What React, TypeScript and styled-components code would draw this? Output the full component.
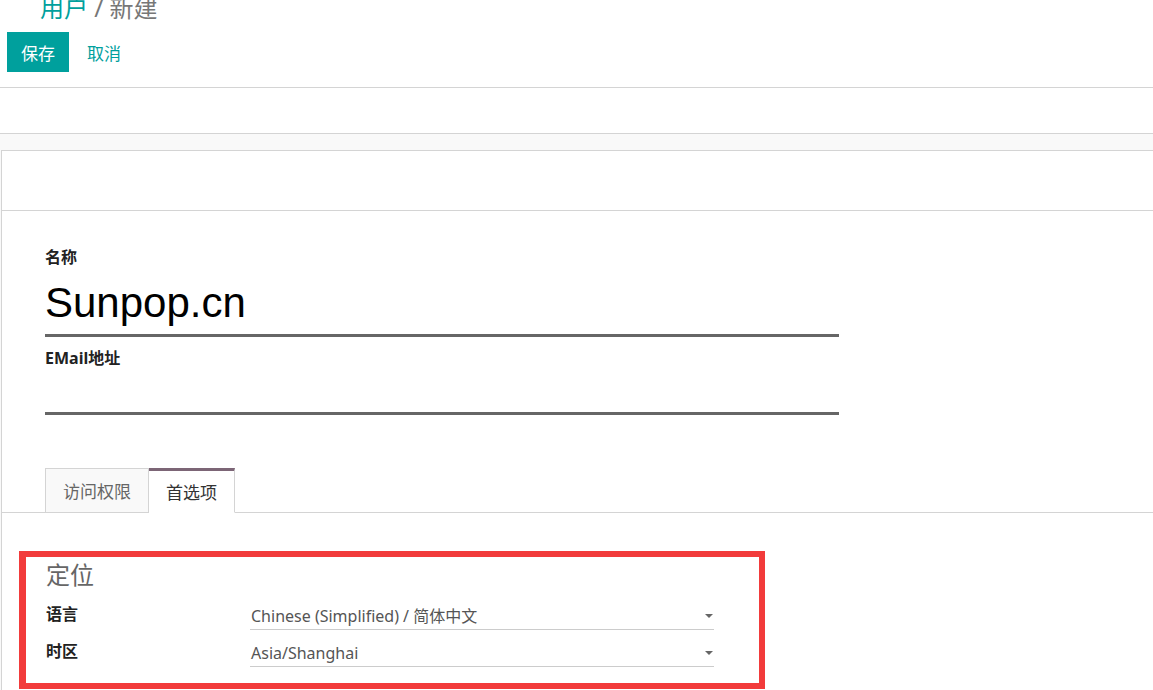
import React from "react";
import styled, { createGlobalStyle } from "styled-components";

const GlobalStyle = createGlobalStyle`
  html, body {
    margin: 0;
    padding: 0;
    background: #ffffff;
    overflow: hidden;
  }
  body {
    font-family: "Noto Sans", "Noto Sans CJK SC", sans-serif;
    color: #333333;
  }
  * {
    box-sizing: border-box;
  }
`;

const teal = "#00a09d";
const line = "#d4d4d4";

type TField = {
  readonly label: string;
  readonly value: string;
};

const locale: TField[] = [
  { label: "语言", value: "Chinese (Simplified) / 简体中文" },
  { label: "时区", value: "Asia/Shanghai" },
];

export default function App() {
  return (
    <Page>
      <GlobalStyle />
      <ControlPanel>
        <Breadcrumb>
          <Crumb>用户</Crumb>
          <Current> / 新建</Current>
        </Breadcrumb>
        <Buttons>
          <SaveButton>保存</SaveButton>
          <LinkButton>取消</LinkButton>
        </Buttons>
      </ControlPanel>
      <SubBar />
      <Content>
        <Sheet>
          <StatusBar />
          <SheetBody>
            <FieldLabel>名称</FieldLabel>
            <TitleInput>Sunpop.cn</TitleInput>
            <FieldLabel>EMail地址</FieldLabel>
            <EmailInput />
            <Tabs>
              <Tab>访问权限</Tab>
              <Tab $active>首选项</Tab>
            </Tabs>
            <Highlight>
              <GroupTitle>定位</GroupTitle>
              {locale.map(({ label, value }) => (
                <Row key={label}>
                  <RowLabel>{label}</RowLabel>
                  <Select>
                    <span>{value}</span>
                    <Caret />
                  </Select>
                </Row>
              ))}
            </Highlight>
          </SheetBody>
        </Sheet>
      </Content>
    </Page>
  );
}

const Page = styled.div`
  width: 1153px;
  height: 690px;
  overflow: hidden;
`;

const ControlPanel = styled.div`
  border-bottom: 1px solid ${line};
  padding-bottom: 15px;
`;

const Breadcrumb = styled.div`
  margin-top: -6px;
  padding-left: 40px;
  font-size: 24px;
  line-height: 28px;
`;

const Crumb = styled.span`
  color: ${teal};
`;

const Current = styled.span`
  color: #777777;
`;

const Buttons = styled.div`
  display: flex;
  align-items: center;
  margin-top: 10px;
  padding-left: 7px;
`;

const SaveButton = styled.button`
  height: 40px;
  padding: 0 14px;
  border: none;
  background: ${teal};
  color: #ffffff;
  font-family: inherit;
  font-size: 17px;
`;

const LinkButton = styled(SaveButton)`
  margin-left: 4px;
  background: transparent;
  color: ${teal};
`;

const SubBar = styled.div`
  height: 46px;
  border-bottom: 1px solid ${line};
`;

const Content = styled.div`
  background: #f9f9f9;
  padding: 16px 0 0 1px;
`;

const Sheet = styled.div`
  width: 1200px;
  height: 560px;
  background: #ffffff;
  border-top: 1px solid ${line};
  border-left: 1px solid ${line};
`;

const StatusBar = styled.div`
  height: 60px;
  border-bottom: 1px solid ${line};
`;

const SheetBody = styled.div`
  padding: 35px 0 0 43px;
`;

const FieldLabel = styled.div`
  font-size: 16px;
  line-height: 22px;
  font-weight: 700;
  color: #222222;
`;

const TitleInput = styled.div`
  width: 794px;
  margin: 11px 0 10px;
  padding-bottom: 7px;
  border-bottom: 3px solid #666666;
  font-family: "Liberation Sans", Arial, sans-serif;
  font-size: 42px;
  line-height: 48px;
  color: #000000;
`;

const EmailInput = styled.div`
  width: 794px;
  height: 46px;
  border-bottom: 3px solid #666666;
`;

const Tabs = styled.div`
  display: flex;
  margin: 53px 0 0 -43px;
  padding-left: 43px;
  border-bottom: 1px solid ${line};
`;

const Tab = styled.div<{ $active?: boolean }>`
  height: 45px;
  margin-bottom: -1px;
  padding: 0 17px;
  display: flex;
  align-items: center;
  font-size: 17px;
  border: 1px solid ${line};
  border-left-width: ${(p) => (p.$active ? "0" : "1px")};
  border-top: ${(p) => (p.$active ? "3px solid #7c6576" : `1px solid ${line}`)};
  border-bottom: ${(p) => (p.$active ? "1px solid #ffffff" : `1px solid ${line}`)};
  background: ${(p) => (p.$active ? "#ffffff" : "#f9f9f9")};
  color: ${(p) => (p.$active ? "#333333" : "#666666")};
`;

const Highlight = styled.div`
  width: 746px;
  margin: 38px 0 0 -26px;
  padding: 3px 45px 16px 20px;
  border: 6px solid #f23b3b;
  border-left-width: 7px;
`;

const GroupTitle = styled.div`
  font-size: 24px;
  line-height: 30px;
  color: #666666;
  margin-bottom: 13px;
`;

const Row = styled.div`
  display: flex;
  align-items: flex-end;
  margin-bottom: 10px;

  &:last-child {
    margin-bottom: 0;
  }
`;

const RowLabel = styled.div`
  width: 204px;
  font-size: 16px;
  line-height: 22px;
  font-weight: 700;
  color: #222222;
  padding-bottom: 5px;
`;

const Select = styled.div`
  flex: 1;
  display: flex;
  align-items: center;
  justify-content: space-between;
  padding: 0 0 2px 1px;
  border-bottom: 1px solid #cccccc;
  font-size: 16px;
  line-height: 22px;
  color: #555555;
`;

const Caret = styled.span`
  width: 0;
  height: 0;
  margin-right: 1px;
  border-left: 4px solid transparent;
  border-right: 4px solid transparent;
  border-top: 4px solid #666666;
`;
